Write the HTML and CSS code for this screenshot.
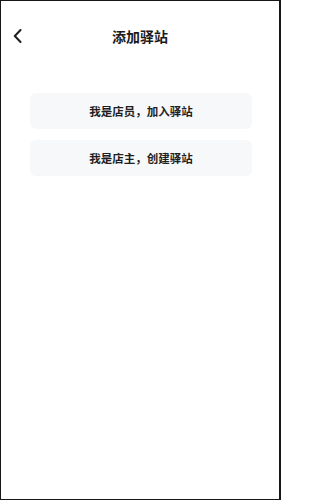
FILE: index.html
```html
<!DOCTYPE html>
<html lang="zh-CN">
<head>
<meta charset="utf-8">
<title>添加驿站</title>
<link rel="stylesheet" href="styles.css">
</head>
<body>
<div class="frame">
  <header class="nav">
    <div class="nav-left">
      <svg class="back" width="9" height="14" viewBox="0 0 9 14"><polyline points="7.5,1 1.8,7 7.5,13" fill="none" stroke="#1f1f1f" stroke-width="2" stroke-linecap="round" stroke-linejoin="round"/></svg>
    </div>
    <div class="nav-title">添加驿站</div>
    <div class="nav-right"></div>
  </header>
  <main class="options">
    <div class="option">我是店员，加入驿站</div>
    <div class="option">我是店主，创建驿站</div>
  </main>
</div>
</body>
</html>
```

FILE: styles.css
```css
html, body {
  margin: 0;
  padding: 0;
  background: #ffffff;
}
body {
  font-family: "Noto Sans CJK SC", "Noto Sans", sans-serif;
  color: #1f1f1f;
}
.frame {
  box-sizing: border-box;
  width: 281px;
  height: 500px;
  border-style: solid;
  border-color: #161616;
  border-width: 1px 2px 1px 1px;
  background: #ffffff;
  display: flex;
  flex-direction: column;
}
.nav {
  height: 70px;
  display: grid;
  grid-template-columns: 1fr auto 1fr;
  align-items: center;
}
.nav-left {
  padding-left: 12px;
  display: flex;
  align-items: center;
}
.back {
  display: block;
}
.nav-title {
  font-size: 14px;
  font-weight: 700;
  line-height: 20px;
  color: #1a1a1a;
}
.options {
  padding: 22px 27px 0 29px;
  display: flex;
  flex-direction: column;
  gap: 11px;
}
.option {
  height: 36px;
  border-radius: 6px;
  background: #f7f8fa;
  display: flex;
  align-items: center;
  justify-content: center;
  font-size: 11.5px;
  font-weight: 700;
  color: #1f1f1f;
}
```
